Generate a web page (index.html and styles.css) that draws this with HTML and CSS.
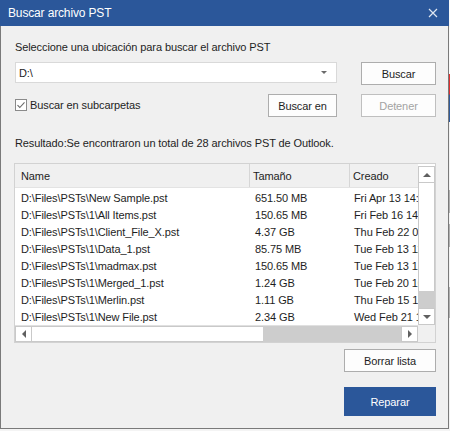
FILE: index.html
```html
<!DOCTYPE html>
<html lang="es">
<head>
<meta charset="utf-8">
<title>Buscar archivo PST</title>
<link rel="stylesheet" href="styles.css">
</head>
<body>
<div class="screen">
  <div class="window">
    <div class="titlebar">
      <span class="title">Buscar archivo PST</span>
      <svg class="close" width="10" height="10" viewBox="0 0 10 10"><path d="M1 1 L9 9 M9 1 L1 9" stroke="#dfe6f1" stroke-width="1.2" fill="none"/></svg>
    </div>
    <div class="content">
      <div class="label first">Seleccione una ubicación para buscar el archivo PST</div>
      <div class="row combo-row">
        <div class="combo">
          <span class="combo-text">D:\</span>
          <span class="combo-arrow"></span>
        </div>
        <button class="btn w75">Buscar</button>
      </div>
      <div class="row check-row">
        <label class="check">
          <svg class="checkbox" width="12" height="12" viewBox="0 0 12 12"><rect x="0.5" y="0.5" width="11" height="11" fill="#fff" stroke="#8a8a8a"/><path d="M2.5 6.2 L4.8 8.5 L9.5 3.4" stroke="#6a6a6a" stroke-width="1.1" fill="none"/></svg>
          <span>Buscar en subcarpetas</span>
        </label>
        <div class="btn-group">
          <button class="btn w69">Buscar en</button>
          <button class="btn w75 disabled">Detener</button>
        </div>
      </div>
      <div class="label result">Resultado:Se encontraron un total de 28 archivos PST de Outlook.</div>
      <div class="list">
        <div class="viewport">
          <div class="header">
            <div class="hcell c-name">Name</div>
            <div class="hcell c-size">Tamaño</div>
            <div class="hcell c-date">Creado</div>
          </div>
          <div class="rows">
            <div class="lrow"><span class="c-name">D:\Files\PSTs\New Sample.pst</span><span class="c-size">651.50 MB</span><span class="c-date">Fri Apr 13 14:20:11 2018</span></div>
            <div class="lrow"><span class="c-name">D:\Files\PSTs\1\All Items.pst</span><span class="c-size">150.65 MB</span><span class="c-date">Fri Feb 16 14:02:33 2018</span></div>
            <div class="lrow"><span class="c-name">D:\Files\PSTs\1\Client_File_X.pst</span><span class="c-size">4.37 GB</span><span class="c-date">Thu Feb 22 09:41:05 2018</span></div>
            <div class="lrow"><span class="c-name">D:\Files\PSTs\1\Data_1.pst</span><span class="c-size">85.75 MB</span><span class="c-date">Tue Feb 13 11:15:48 2018</span></div>
            <div class="lrow"><span class="c-name">D:\Files\PSTs\1\madmax.pst</span><span class="c-size">150.65 MB</span><span class="c-date">Tue Feb 13 12:30:27 2018</span></div>
            <div class="lrow"><span class="c-name">D:\Files\PSTs\1\Merged_1.pst</span><span class="c-size">1.24 GB</span><span class="c-date">Tue Feb 20 10:04:19 2018</span></div>
            <div class="lrow"><span class="c-name">D:\Files\PSTs\1\Merlin.pst</span><span class="c-size">1.11 GB</span><span class="c-date">Thu Feb 15 16:52:40 2018</span></div>
            <div class="lrow"><span class="c-name">D:\Files\PSTs\1\New File.pst</span><span class="c-size">2.34 GB</span><span class="c-date">Wed Feb 21 13:08:56 2018</span></div>
          </div>
        </div>
        <div class="vscroll">
          <div class="sbtn"><span class="tri up"></span></div>
          <div class="vthumb"></div>
          <div class="vtrack"></div>
          <div class="sbtn"><span class="tri down"></span></div>
        </div>
        <div class="hscroll">
          <div class="sbtn"><span class="tri left"></span></div>
          <div class="hthumb"></div>
          <div class="htrack"></div>
          <div class="sbtn"><span class="tri right"></span></div>
        </div>
        <div class="corner"></div>
      </div>
      <div class="row end-row clear-row">
        <button class="btn w92">Borrar lista</button>
      </div>
      <div class="row end-row repair-row">
        <button class="btn primary w92">Reparar</button>
      </div>
    </div>
  </div>
  <div class="strip"></div>
</div>
</body>
</html>
```

FILE: styles.css
```css
* { box-sizing: border-box; }

html, body {
  margin: 0;
  padding: 0;
}

body {
  width: 450px;
  height: 431px;
  background: #f4f4f4;
  font-family: "Liberation Sans", Arial, sans-serif;
  font-size: 11px;
  letter-spacing: -0.1px;
  color: #1e1e1e;
  overflow: hidden;
}

.screen {
  display: flex;
  align-items: flex-start;
}

.window {
  width: 449px;
  height: 429px;
  background: #f0f0f0;
  border: 1px solid #7a7a7a;
  border-top: 0;
  display: flex;
  flex-direction: column;
}

.strip {
  width: 1px;
  height: 431px;
  background: linear-gradient(to bottom,
    #fafafa 0, #fafafa 74px,
    #e03030 74px, #e03030 94px,
    #2f5a9a 95px, #2f5a9a 122px,
    #f2f2f2 122px, #f2f2f2 190px,
    #b0b0b0 190px, #b0b0b0 213px,
    #f2f2f2 213px, #f2f2f2 224px,
    #b0b0b0 224px, #b0b0b0 247px,
    #f2f2f2 247px, #f2f2f2 287px,
    #b0b0b0 287px, #b0b0b0 318px,
    #f2f2f2 318px);
}

.titlebar {
  height: 26px;
  margin: 0 -1px;
  background: #2b579a;
  color: #ffffff;
  display: flex;
  align-items: center;
  justify-content: space-between;
  padding: 0 11px 1px 8px;
}

.title {
  font-size: 12px;
  letter-spacing: -0.15px;
  line-height: 16px;
}

.close {
  display: block;
  margin-top: 1px;
}

.content {
  flex: 1;
  display: flex;
  flex-direction: column;
  padding: 0 12px 0 14px;
}

.label {
  line-height: 16px;
  height: 16px;
  white-space: nowrap;
}

.label.first { margin-top: 13px; }
.label.result { margin-top: 18px; }

.row {
  display: flex;
  align-items: flex-start;
}

.combo-row {
  margin-top: 7px;
  justify-content: space-between;
}

.combo {
  width: 322px;
  height: 21px;
  background: #ffffff;
  border: 1px solid #d9d9d9;
  display: flex;
  align-items: center;
  justify-content: space-between;
  padding: 0 9px 0 3px;
}

.combo-text { line-height: 16px; }

.combo-arrow {
  width: 0;
  height: 0;
  border-left: 3px solid transparent;
  border-right: 3px solid transparent;
  border-top: 3px solid #6a6a6a;
}

.btn {
  font: inherit;
  letter-spacing: inherit;
  color: #1e1e1e;
  height: 23px;
  background: #fdfdfd;
  border: 1px solid #adadad;
  padding: 0;
  margin: 0;
  line-height: 16px;
}

.w75 { width: 75px; }
.w69 { width: 69px; }
.w92 { width: 92px; }

.btn.disabled {
  color: #a3a3a3;
  border-color: #bfbfbf;
}

.btn.primary {
  height: 29px;
  background: #2b579a;
  border-color: #2b579a;
  color: #ffffff;
}

.check-row {
  margin-top: 9px;
  justify-content: space-between;
  align-items: center;
}

.check {
  display: flex;
  align-items: center;
  gap: 3px;
  margin-top: -1px;
}

.checkbox { display: block; }

.btn-group {
  display: flex;
  gap: 24px;
}

.list {
  margin-top: 12px;
  margin-left: -1px;
  width: 422px;
  height: 180px;
  background: #ffffff;
  border: 1px solid #d2d2d2;
  display: grid;
  grid-template-columns: 1fr 17px;
  grid-template-rows: 1fr 17px;
}

.viewport {
  overflow: hidden;
  position: relative;
}

.header {
  display: flex;
  height: 24px;
  background: #f0f0f0;
  border-bottom: 1px solid #e3e3e3;
  white-space: nowrap;
}

.hcell {
  line-height: 23px;
  padding-top: 1px;
  border-right: 1px solid #d6d6d6;
  flex: none;
}

.c-name { width: 235px; padding-left: 6px; }
.c-size { width: 100px; padding-left: 5px; }
.c-date { width: 160px; padding-left: 4px; }

.hcell.c-size { padding-left: 3px; }
.hcell.c-date { border-right: 0; padding-left: 3px; }

.rows {
  padding-top: 2px;
}

.lrow {
  display: flex;
  height: 17px;
  line-height: 17px;
  white-space: nowrap;
}

.lrow span { flex: none; overflow: hidden; }

.vscroll {
  display: flex;
  flex-direction: column;
  padding-top: 2px;
}

.sbtn {
  flex: none;
  width: 17px;
  height: 17px;
  border: 1px solid #c9c9c9;
  background: #ffffff;
  display: flex;
  align-items: center;
  justify-content: center;
}

.vthumb {
  height: 108px;
  background: #ffffff;
  border-left: 1px solid #c9c9c9;
  border-right: 1px solid #c9c9c9;
}

.vtrack {
  flex: 1;
  background: #cdcdcd;
}

.hscroll {
  display: flex;
  border-top: 1px solid #e0e0e0;
}

.hscroll .sbtn { height: 16px; }

.hthumb {
  width: 231px;
  background: #ffffff;
  border-top: 1px solid #c9c9c9;
  border-bottom: 1px solid #c9c9c9;
}

.htrack {
  flex: 1;
  background: #cdcdcd;
}

.corner {
  background: #f0f0f0;
}

.tri {
  width: 0;
  height: 0;
  display: block;
}

.tri.up {
  border-left: 4px solid transparent;
  border-right: 4px solid transparent;
  border-bottom: 4px solid #606060;
}

.tri.down {
  border-left: 4px solid transparent;
  border-right: 4px solid transparent;
  border-top: 4px solid #606060;
}

.tri.left {
  border-top: 4px solid transparent;
  border-bottom: 4px solid transparent;
  border-right: 4px solid #606060;
}

.tri.right {
  border-top: 4px solid transparent;
  border-bottom: 4px solid transparent;
  border-left: 4px solid #606060;
}

.end-row { justify-content: flex-end; }
.clear-row { margin-top: 6px; }
.repair-row { margin-top: 15px; }
```
